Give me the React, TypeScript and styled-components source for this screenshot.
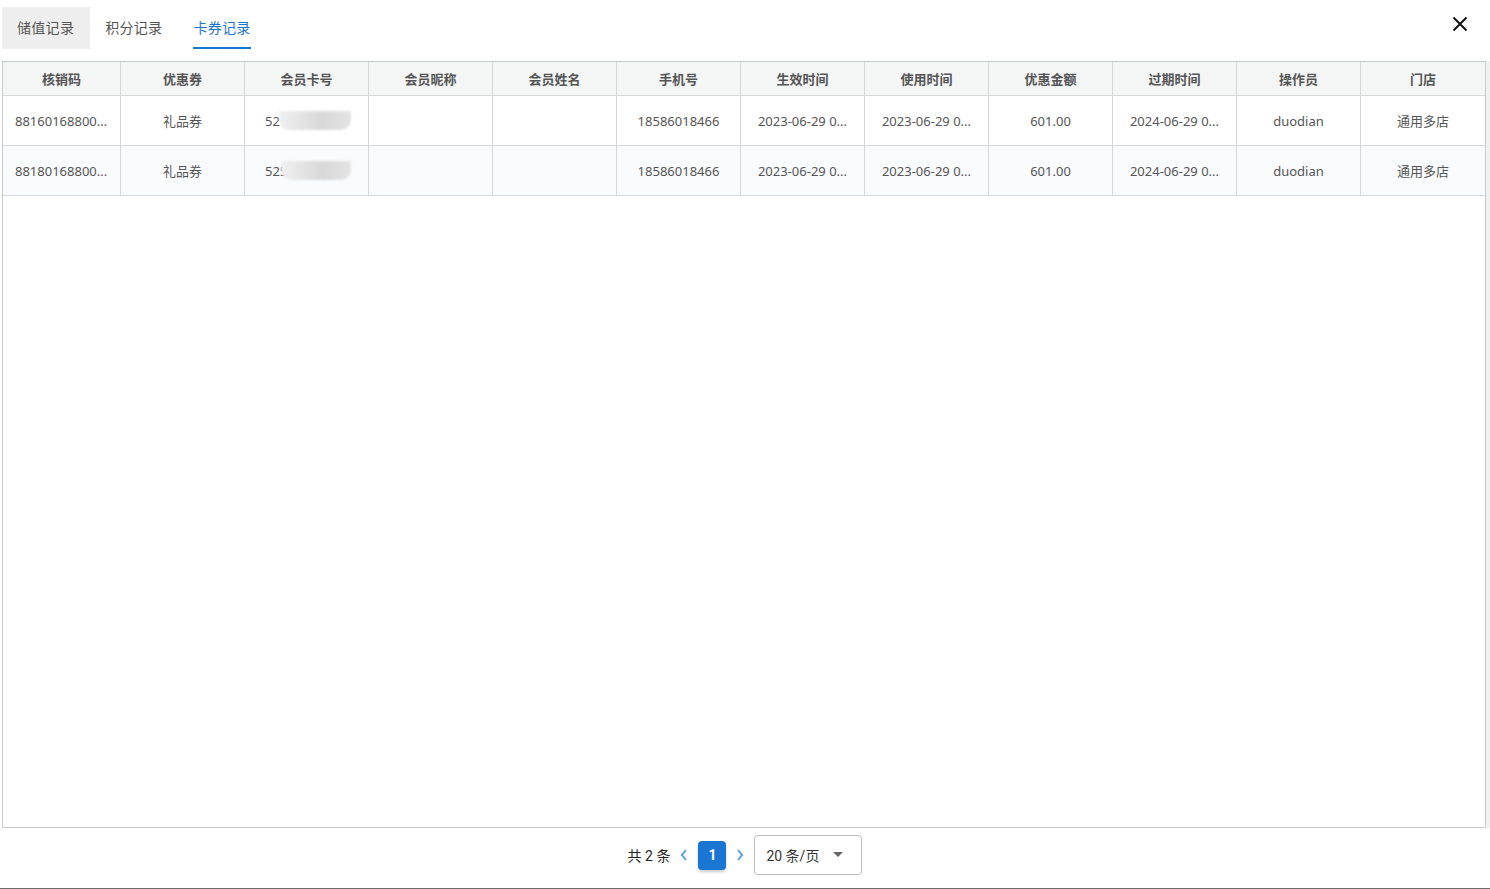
import React, { useState } from "react"
import styled, { createGlobalStyle } from "styled-components"

const GlobalStyle = createGlobalStyle`
  html, body {
    margin: 0;
    padding: 0;
    background: #fff;
  }
  body {
    font-family: "Noto Sans", "Noto Sans CJK SC", sans-serif;
  }
`

const Page = styled.div`
  width: 1490px;
  height: 889px;
  box-sizing: border-box;
  display: flex;
  flex-direction: column;
  border-bottom: 1px solid #6b6b6b;
  position: relative;
`

const TabBar = styled.div`
  height: 61px;
  display: flex;
  align-items: flex-start;
  padding: 7px 0 0 2px;
  box-sizing: border-box;
`

const Tab = styled.div<{ $active?: boolean; $shaded?: boolean }>`
  height: 42px;
  padding: 0 16px 2px 15px;
  box-sizing: border-box;
  display: flex;
  align-items: center;
  font-size: 14px;
  letter-spacing: 0.3px;
  color: ${(p) => (p.$active ? "#1976d2" : "#555")};
  background: ${(p) => (p.$shaded ? "#eeeeee" : "transparent")};
  position: relative;
  cursor: pointer;
  &:after {
    content: "";
    display: ${(p) => (p.$active ? "block" : "none")};
    position: absolute;
    left: 15px;
    right: 16px;
    bottom: 0;
    height: 2px;
    background: #1976d2;
  }
`

const CloseButton = styled.button`
  position: absolute;
  top: 12px;
  right: 18px;
  width: 24px;
  height: 24px;
  border: none;
  background: transparent;
  padding: 0;
  display: flex;
  align-items: center;
  justify-content: center;
  cursor: pointer;
`

const TableWrap = styled.div`
  display: flex;
  height: 767px;
`

const Table = styled.div`
  margin-left: 2px;
  width: 1484px;
  box-sizing: border-box;
  border: 1px solid #c9cccf;
`

const ScrollTrack = styled.div`
  width: 4px;
  background: #f1f1f1;
`

const Row = styled.div<{ $head?: boolean; $alt?: boolean }>`
  display: grid;
  grid-template-columns: 118px repeat(11, 124px);
  height: ${(p) => (p.$head ? "33px" : "49px")};
  background: ${(p) => (p.$head ? "#f4f5f5" : p.$alt ? "#fafbfd" : "#fff")};
  border-bottom: 1px solid #d6d8db;
  font-size: 13px;
  color: #555;
  font-weight: ${(p) => (p.$head ? 700 : 400)};
`

const Cell = styled.div<{ $align?: "left" | "center"; $indent?: number }>`
  position: relative;
  display: flex;
  align-items: center;
  justify-content: ${(p) => (p.$align === "left" ? "flex-start" : "center")};
  padding: 0 8px 0 ${(p) => (p.$align === "left" ? `${p.$indent ?? 12}px` : "8px")};
  border-right: 1px solid #d6d8db;
  white-space: nowrap;
  overflow: hidden;
  &:last-child {
    border-right: none;
  }
`

const CardBlur = styled.span<{ $left: number }>`
  position: absolute;
  left: ${(p) => p.$left}px;
  top: 15px;
  width: ${(p) => 106 - p.$left}px;
  height: 19px;
  border-radius: 0 0 10px 10px;
  background: linear-gradient(90deg, #f0f0f0 0%, #e2e2e3 35%, #d8d8d9 60%, #e4e4e4 100%);
  filter: blur(1.2px);
`

const Footer = styled.div`
  flex: 1;
  display: flex;
  align-items: center;
  justify-content: center;
  font-family: Roboto, "Noto Sans CJK SC", sans-serif;
  font-size: 14px;
  padding-bottom: 6px;
`

const Total = styled.span`
  color: #222;
`

const Arrow = styled.button`
  border: none;
  background: transparent;
  padding: 0;
  width: 28px;
  height: 28px;
  display: flex;
  align-items: center;
  justify-content: center;
  cursor: pointer;
`

const PageBtn = styled.button`
  width: 28px;
  height: 29px;
  border: none;
  border-radius: 4px;
  background: #1976d2;
  color: #fff;
  font-family: Roboto, sans-serif;
  font-weight: 700;
  font-size: 14px;
  box-shadow: 0 2px 3px rgba(0, 0, 0, 0.2);
`

const Select = styled.div`
  width: 108px;
  height: 40px;
  box-sizing: border-box;
  border: 1px solid #bdbdbd;
  border-radius: 4px;
  display: flex;
  align-items: center;
  justify-content: space-between;
  padding: 0 18px 0 11px;
  color: #333;
`

const headers = ["核销码", "优惠券", "会员卡号", "会员昵称", "会员姓名", "手机号", "生效时间", "使用时间", "优惠金额", "过期时间", "操作员", "门店"]

const rows = [
  { code: "88160168800...", card: "52", blurLeft: 34 },
  { code: "88180168800...", card: "525", blurLeft: 36 },
]

export default function App() {
  const [tab, setTab] = useState(2)
  const tabs = ["储值记录", "积分记录", "卡券记录"]
  return (
    <Page>
      <GlobalStyle />
      <TabBar>
        {tabs.map((t, i) => (
          <Tab key={t} $active={tab === i} $shaded={i === 0} onClick={() => setTab(i)}>
            {t}
          </Tab>
        ))}
      </TabBar>
      <CloseButton aria-label="close">
        <svg width="16" height="16" viewBox="0 0 16 16">
          <path d="M1.5 1.5 L14.5 14.5 M14.5 1.5 L1.5 14.5" stroke="#111" strokeWidth="2" />
        </svg>
      </CloseButton>
      <TableWrap>
        <Table>
          <Row $head>
            {headers.map((h) => (
              <Cell key={h}>{h}</Cell>
            ))}
          </Row>
          {rows.map((r, i) => (
            <Row key={r.code} $alt={i === 1}>
              <Cell $align="left">{r.code}</Cell>
              <Cell>礼品券</Cell>
              <Cell $align="left" $indent={20}>
                {r.card}
                <CardBlur $left={r.blurLeft} />
              </Cell>
              <Cell />
              <Cell />
              <Cell>18586018466</Cell>
              <Cell>2023-06-29 0...</Cell>
              <Cell>2023-06-29 0...</Cell>
              <Cell>601.00</Cell>
              <Cell>2024-06-29 0...</Cell>
              <Cell>duodian</Cell>
              <Cell>通用多店</Cell>
            </Row>
          ))}
        </Table>
        <ScrollTrack />
      </TableWrap>
      <Footer>
        <Total>共 2 条</Total>
        <Arrow aria-label="prev">
          <svg width="10" height="14" viewBox="0 0 10 14">
            <path d="M7 2 L3 7 L7 12" fill="none" stroke="#5c9de0" strokeWidth="2" />
          </svg>
        </Arrow>
        <PageBtn>1</PageBtn>
        <Arrow aria-label="next">
          <svg width="10" height="14" viewBox="0 0 10 14">
            <path d="M3 2 L7 7 L3 12" fill="none" stroke="#5c9de0" strokeWidth="2" />
          </svg>
        </Arrow>
        <Select>
          <span>20 条/页</span>
          <svg width="10" height="6" viewBox="0 0 10 6">
            <path d="M0 0 L10 0 L5 5 Z" fill="#666" />
          </svg>
        </Select>
      </Footer>
    </Page>
  )
}
